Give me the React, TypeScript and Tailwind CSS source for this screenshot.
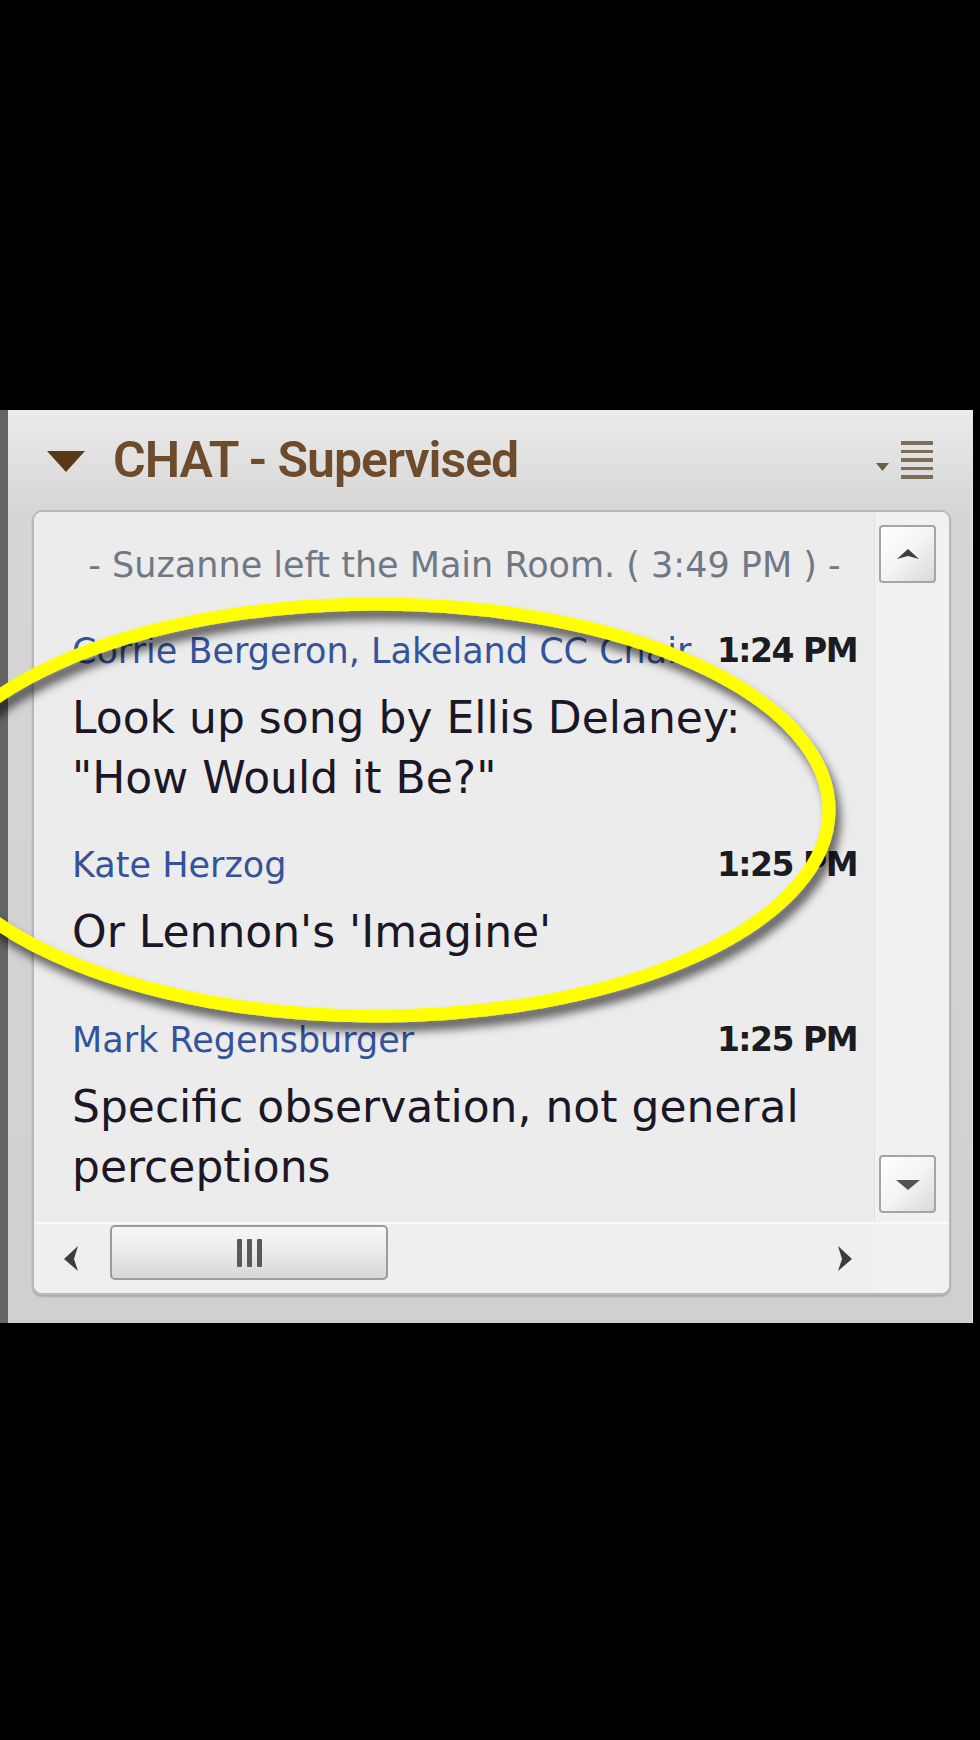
import React from 'react';

const bodyFont = { fontFamily: '"DejaVu Sans", "Liberation Sans", sans-serif' };

const ScrollButton: React.FC<{ dir: 'up' | 'down' }> = ({ dir }) => (
  <div className="ml-[5px] flex h-[58px] w-[57px] items-center justify-center rounded-[4px] border-2 border-[#a5a5a5] bg-gradient-to-br from-white via-[#f4f4f4] to-[#d9d9d9]">
    <svg width="26" height="14" viewBox="0 0 26 14">
      {dir === 'up' ? (
        <path d="M2 12 L13 2 L24 12 L13 9 Z" fill="#3f3f3f" />
      ) : (
        <path d="M1 3 L25 3 L13 13 Z" fill="#555" />
      )}
    </svg>
  </div>
);

const ChatEntry: React.FC<{ name: string; time: string; lines: string[]; top: string }> = ({ name, time, lines, top }) => (
  <div className={top}>
    <div className="flex h-[42px] items-center leading-[42px]">
      <span className="min-w-0 flex-1 overflow-hidden whitespace-nowrap text-[35px] text-[#34539b]">{name}</span>
      <span className="ml-[20px] shrink-0 text-[33px] font-bold tracking-[-1.5px] text-[#1b1b22]">{time}</span>
    </div>
    <div className="mt-[16px] text-[44px] leading-[60px] text-[#1b1726]">
      {lines.map((l, i) => (
        <div key={i}>{l}</div>
      ))}
    </div>
  </div>
);

export default function App() {
  return (
    <div className="relative h-[1740px] w-[980px] overflow-hidden bg-black" style={bodyFont}>
      <div className="mt-[410px] flex h-[913px] w-[973px] flex-col border-l-[8px] border-r border-l-[#646464] border-r-[#e2e2e2] bg-gradient-to-b from-[#ebebeb] via-[#d6d6d6] via-[11%] to-[#d0d0d0]">
        {/* header */}
        <div className="flex h-[100px] shrink-0 items-center pl-[39px] pr-[39px]">
          <svg width="38" height="21" viewBox="0 0 38 21" className="mt-[2px]">
            <path d="M0 0 L38 0 L19 21 Z" fill="#5a3a16" />
          </svg>
          <span
            className="ml-[28px] text-[50px] font-semibold leading-none tracking-[-1px] text-[#6d4b2b]"
            style={{ fontFamily: 'Roboto, "Liberation Sans", sans-serif' }}
          >
            CHAT - Supervised
          </span>
          <div className="ml-auto flex items-center gap-[12px]">
            <svg width="13" height="8" viewBox="0 0 13 8" className="mt-[14px]">
              <path d="M0 0 L13 0 L6.5 8 Z" fill="#6a5c4a" />
            </svg>
            <div className="flex w-[32px] flex-col gap-[5px]">
              <div className="h-[3.5px] bg-[#7d6e5a]" />
              <div className="h-[3.5px] bg-[#7d6e5a]" />
              <div className="h-[3.5px] bg-[#7d6e5a]" />
              <div className="h-[3.5px] bg-[#7d6e5a]" />
              <div className="h-[3.5px] bg-[#7d6e5a]" />
            </div>
          </div>
        </div>

        {/* chat box */}
        <div className="ml-[24px] mr-[21px] flex h-[785px] flex-col overflow-hidden rounded-[10px] border-2 border-[#b9b9b9] bg-[#ececec] shadow-[0_2px_2px_rgba(0,0,0,0.18)]">
          <div className="flex min-h-0 flex-1">
            <div className="min-w-0 flex-1 pl-[38px] pr-[17px] pt-[32px]">
              <div className="whitespace-nowrap text-center text-[35px] leading-[42px] text-[#6f7884]">
                - Suzanne left the Main Room. ( 3:49 PM ) -
              </div>
              <ChatEntry
                top="mt-[44px]"
                name="Corrie Bergeron, Lakeland CC Chair"
                time="1:24 PM"
                lines={['Look up song by Ellis Delaney:', '"How Would it Be?"']}
              />
              <ChatEntry top="mt-[36px]" name="Kate Herzog" time="1:25 PM" lines={["Or Lennon's 'Imagine'"]} />
              <ChatEntry
                top="mt-[57px]"
                name="Mark Regensburger"
                time="1:25 PM"
                lines={['Specific observation, not general', 'perceptions']}
              />
            </div>
            <div className="flex w-[75px] shrink-0 flex-col justify-between bg-[#f1f1f1] pb-[9px] pt-[13px] shadow-[inset_1px_0_0_#e3e3e3]">
              <ScrollButton dir="up" />
              <ScrollButton dir="down" />
            </div>
          </div>
          <div className="flex h-[71px] shrink-0 border-t-2 border-[#f9f9f9]">
            <div className="flex flex-1 items-center bg-[#efefef] pl-[28px] pr-[20px]">
              <svg width="18" height="29" viewBox="0 0 18 29">
                <path d="M16 2 L2 15 L16 27 L12 15 Z" fill="#3d3d3d" />
              </svg>
              <div className="ml-[30px] mt-[-12px] flex h-[55px] w-[278px] items-center justify-center rounded-[5px] border-2 border-[#9c9c9c] bg-gradient-to-b from-[#f7f7f7] via-[#ececec] via-[45%] to-[#d6d6d6]">
                <div className="flex gap-[5px]">
                  <div className="h-[28px] w-[5px] rounded-[1px] bg-[#5a5a5a]" />
                  <div className="h-[28px] w-[5px] rounded-[1px] bg-[#5a5a5a]" />
                  <div className="h-[28px] w-[5px] rounded-[1px] bg-[#5a5a5a]" />
                </div>
              </div>
              <div className="flex-1" />
              <svg width="18" height="29" viewBox="0 0 18 29">
                <path d="M2 2 L16 15 L2 27 L6 15 Z" fill="#3d3d3d" />
              </svg>
            </div>
            <div className="w-[75px] shrink-0 bg-[#f1f1f1]" />
          </div>
        </div>
      </div>

      {/* yellow annotation ellipse */}
      <svg className="pointer-events-none absolute left-0 top-0" width="980" height="1740" viewBox="0 0 980 1740">
        <defs>
          <filter id="sh" x="-20%" y="-20%" width="140%" height="140%">
            <feDropShadow dx="5" dy="9" stdDeviation="5" floodColor="#000" floodOpacity="0.6" />
          </filter>
        </defs>
        <ellipse cx="376" cy="810" rx="453" ry="206" fill="none" stroke="#ffff00" strokeWidth="13" filter="url(#sh)" />
      </svg>
    </div>
  );
}
